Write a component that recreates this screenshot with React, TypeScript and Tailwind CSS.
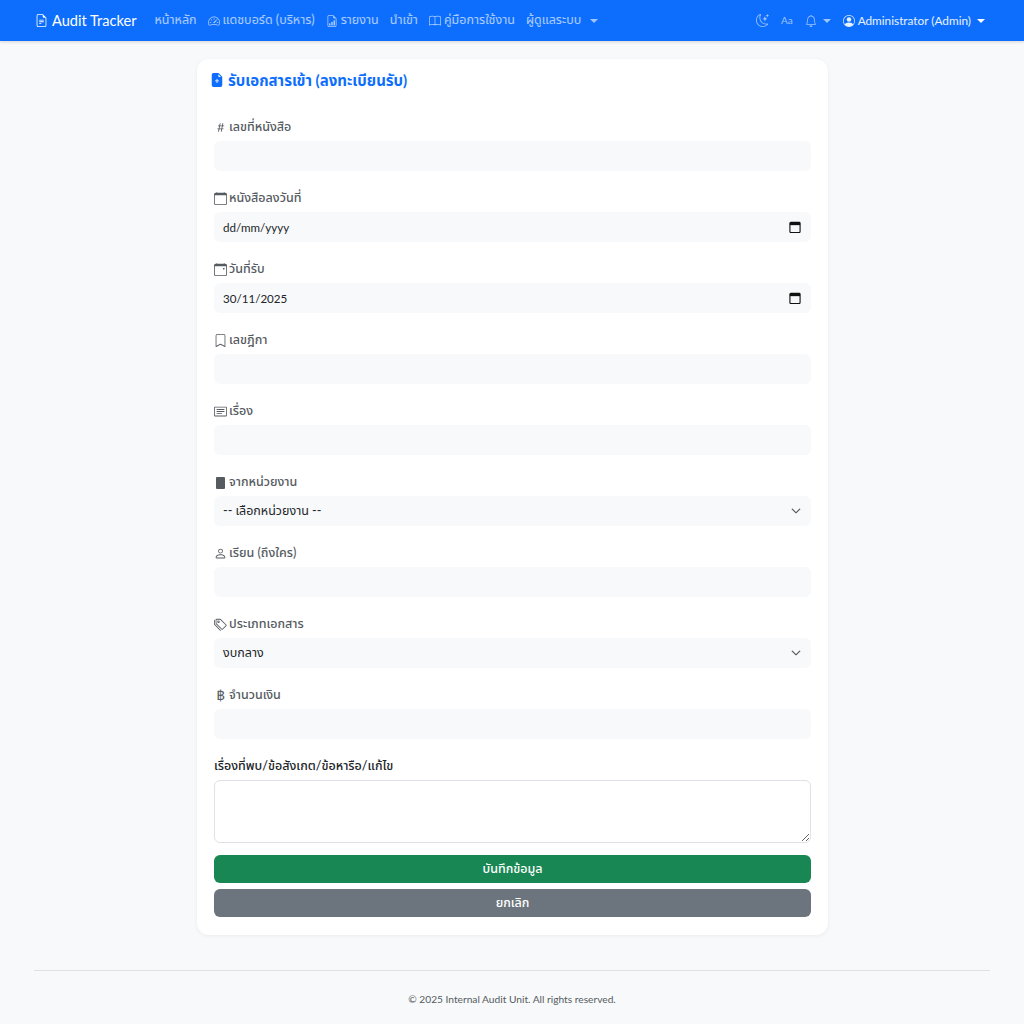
import React from 'react';
import {
  BsBell,
  BsBook,
  BsBookmark,
  BsCalendar,
  BsCalendarEvent,
  BsCardText,
  BsChevronDown,
  BsFileEarmarkBarGraph,
  BsFileEarmarkPlusFill,
  BsFileEarmarkText,
  BsHash,
  BsMoonStars,
  BsPerson,
  BsPersonCircle,
  BsSpeedometer2,
  BsTags,
} from 'react-icons/bs';

const Caret = ({ light = false }: { light?: boolean }) => (
  <span
    className={`ml-[6px] inline-block w-0 h-0 border-x-[4px] border-x-transparent border-t-[4px] ${
      light ? 'border-t-white/60' : 'border-t-white'
    }`}
  />
);

const NavLink = ({ icon, label, caret }: { icon?: React.ReactNode; label: string; caret?: boolean }) => (
  <a className="flex items-center gap-[3px] text-white/65 text-[12.5px] whitespace-nowrap">
    {icon}
    <span>{label}</span>
    {caret && <Caret light />}
  </a>
);

const Navbar = () => (
  <nav className="h-[41px] bg-[#0d6efd] shadow-[0_1px_3px_rgba(0,0,0,0.15)] flex items-center pl-[35px] pr-[39px]">
    <a className="flex items-center gap-[4px] text-white text-[14.6px] mr-[18px] whitespace-nowrap">
      <BsFileEarmarkText className="text-[13px]" />
      <span>Audit Tracker</span>
    </a>
    <div className="flex items-center gap-[11px]">
      <NavLink label="หน้าหลัก" />
      <NavLink icon={<BsSpeedometer2 className="text-[12px]" />} label="แดชบอร์ด (บริหาร)" />
      <NavLink icon={<BsFileEarmarkBarGraph className="text-[12px]" />} label="รายงาน" />
      <NavLink label="นำเข้า" />
      <NavLink icon={<BsBook className="text-[12px]" />} label="คู่มือการใช้งาน" />
      <NavLink label="ผู้ดูแลระบบ" caret />
    </div>
    <div className="ml-auto flex items-center text-white/60">
      <BsMoonStars className="text-[13px]" />
      <span className="ml-[12px] text-[10px]">Aa</span>
      <BsBell className="ml-[12px] text-[12px]" />
      <Caret light />
      <span className="ml-[12px] flex items-center text-white/90 text-[11.8px] whitespace-nowrap">
        <BsPersonCircle className="text-[12px] mr-[3px]" />
        Administrator (Admin)
        <Caret />
      </span>
    </div>
  </nav>
);

const Field = ({ icon, label, children }: { icon?: React.ReactNode; label: string; children: React.ReactNode }) => (
  <div className="mb-[16px]">
    <label className="h-[25px] pb-[2px] flex items-center gap-[2px] text-[12.5px] font-medium text-[#555b61] whitespace-nowrap">
      {icon && <span className="w-[13px] flex justify-center text-[13px]">{icon}</span>}
      {label}
    </label>
    {children}
  </div>
);

const controlClass =
  'w-full h-[30px] bg-[#f8f9fa] rounded-[6px] px-[9px] text-[12.5px] text-[#212529] flex items-center justify-between';

const TextControl = () => <input type="text" className={`${controlClass} outline-none`} />;

const DateControl = ({ value }: { value: string }) => (
  <div className={controlClass}>
    <span className="text-[11.6px] pt-[1px]">{value}</span>
    <svg width="12" height="12" viewBox="0 0 13 13" className="mr-[1px]">
      <path d="M2 1.5h9a1 1 0 0 1 1 1v9a1 1 0 0 1-1 1H2a1 1 0 0 1-1-1v-9a1 1 0 0 1 1-1z" fill="none" stroke="#111" strokeWidth="1.2" />
      <path d="M1 2h11v2.5H1z" fill="#111" />
    </svg>
  </div>
);

const SelectControl = ({ value }: { value: string }) => (
  <div className={controlClass}>
    <span>{value}</span>
    <BsChevronDown className="text-[10px] text-[#343a40] mr-[1px] stroke-[0.8]" />
  </div>
);

const App = () => (
  <div className="min-h-[1024px] bg-[#f8f9fa] font-['Lato','Noto_Sans_Thai','Noto_Sans',sans-serif] text-[#212529]">
    <Navbar />
    <main className="w-[631px] ml-[197px] mt-[18px] bg-white rounded-[12px] shadow-[0_1px_4px_rgba(0,0,0,0.06)] px-[17px] pt-[10px] pb-[18px]">
      <h1 className="h-[24px] pb-[2px] flex items-center gap-[4px] -ml-[4px] mb-[23px] text-[15px] font-bold text-[#0d6efd] whitespace-nowrap">
        <BsFileEarmarkPlusFill className="text-[14px]" />
        รับเอกสารเข้า (ลงทะเบียนรับ)
      </h1>
      <Field icon={<BsHash />} label="เลขที่หนังสือ"><TextControl /></Field>
      <Field icon={<BsCalendar />} label="หนังสือลงวันที่"><DateControl value="dd/mm/yyyy" /></Field>
      <Field icon={<BsCalendarEvent />} label="วันที่รับ"><DateControl value="30/11/2025" /></Field>
      <Field icon={<BsBookmark />} label="เลขฎีกา"><TextControl /></Field>
      <Field icon={<BsCardText />} label="เรื่อง"><TextControl /></Field>
      <Field icon={<span className="block w-[9px] h-[12px] bg-[#555b61] rounded-[1px]" />} label="จากหน่วยงาน">
        <SelectControl value="-- เลือกหน่วยงาน --" />
      </Field>
      <Field icon={<BsPerson />} label="เรียน (ถึงใคร)"><TextControl /></Field>
      <Field icon={<BsTags />} label="ประเภทเอกสาร"><SelectControl value="งบกลาง" /></Field>
      <Field icon={<span className="text-[13px]">฿</span>} label="จำนวนเงิน"><TextControl /></Field>
      <div className="mb-[12px]">
        <label className="h-[25px] pb-[2px] flex items-center text-[12.5px] font-medium text-[#212529] whitespace-nowrap">
          เรื่องที่พบ/ข้อสังเกต/ข้อหารือ/แก้ไข
        </label>
        <textarea className="block w-full h-[63px] rounded-[6px] border border-[#dee2e6] bg-white outline-none" />
      </div>
      <button className="block w-full h-[28px] rounded-[6px] bg-[#198754] text-white text-[12.5px] font-medium">บันทึกข้อมูล</button>
      <button className="block w-full h-[28px] mt-[6px] rounded-[6px] bg-[#6c757d] text-white text-[12.5px] font-medium">ยกเลิก</button>
    </main>
    <footer className="mx-[34px] mt-[35px] border-t border-[#dee2e6] pt-[20px] text-center text-[10.2px] leading-[16px] text-[#555b61]">
      © 2025 Internal Audit Unit. All rights reserved.
    </footer>
  </div>
);

export default App;
